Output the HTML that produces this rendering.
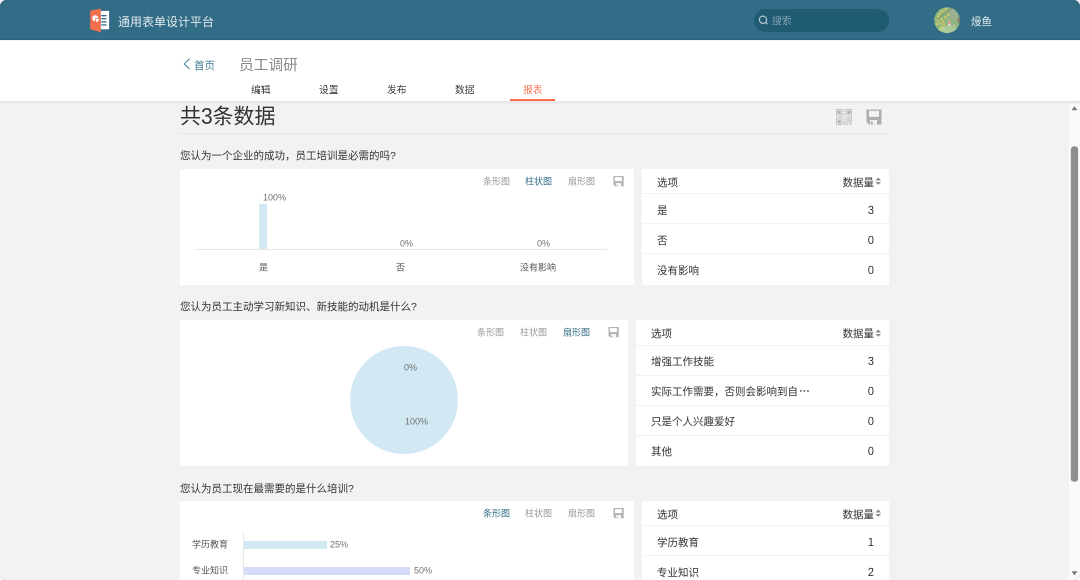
<!DOCTYPE html>
<html lang="zh-CN"><head><meta charset="utf-8">
<style>
*{box-sizing:border-box;margin:0;padding:0}
html,body{width:1080px;height:580px;overflow:hidden;background:#f2f2f2;font-family:"Liberation Sans",sans-serif;color:#333}
.abs{position:absolute}
.t{position:absolute;white-space:nowrap;line-height:1;transform:scale(.5);transform-origin:0 0;will-change:transform}
.t.r{transform:translateX(-100%) scale(.5);transform-origin:100% 0}
</style></head><body>
<div class="abs" style="left:0;top:0;width:1080px;height:40px;background:#326c86;border-bottom:1px solid #2b6680"></div>
<svg class="abs" style="left:85px;top:5px" width="30" height="30" viewBox="0 0 30 30">
    <polygon points="5.2,5.7 15.8,3.4 15.8,27.2 5.2,24.3" fill="#f36f4e"/>
    <rect x="15.8" y="5.9" width="8.3" height="18.4" fill="#fff"/>
    <rect x="16.3" y="10" width="5.2" height="1.3" fill="#336c86"/>
    <rect x="16.3" y="13.1" width="5.2" height="1.3" fill="#336c86"/>
    <rect x="16.3" y="16.2" width="5.2" height="1.3" fill="#336c86"/>
    <rect x="16.3" y="19.3" width="5.2" height="1.3" fill="#336c86"/>
    <path d="M10.2,13.3 L10.2,16.3 A3 3 0 1 1 13.2,13.3 Z" fill="#fff"/><path d="M11,14.1 L14,14.1 A3 3 0 0 1 11,17.1 Z" fill="#fff"/>
  </svg>
<div class="t" style="left:118px;top:15.8px;font-size:24px;transform:scale(0.5000);color:#e3ebef;">通用表单设计平台</div>
<div class="abs" style="left:754px;top:9px;width:135px;height:22.5px;border-radius:12px;background:#1f5b73"></div>
<svg class="abs" style="left:756px;top:13px" width="14" height="14" viewBox="0 0 14 14">
    <circle cx="7" cy="6.7" r="3.6" fill="none" stroke="#b5c9d2" stroke-width="1.2"/>
    <line x1="9.6" y1="9.3" x2="11.4" y2="11.2" stroke="#b5c9d2" stroke-width="1.3"/>
  </svg>
<div class="t" style="left:772.3px;top:16px;font-size:20px;transform:scale(0.4875);color:#86a3b0;">搜索</div>
<svg class="abs" style="left:932px;top:5px" width="30" height="30" viewBox="0 0 30 30">
<defs><clipPath id="av"><circle cx="15.05" cy="15.25" r="12.9"/></clipPath><filter id="bl" x="-10%" y="-10%" width="120%" height="120%"><feGaussianBlur stdDeviation="0.5"/></filter></defs>
<g clip-path="url(#av)"><g filter="url(#bl)">
<rect x="0" y="0" width="30" height="30" fill="#8fb67f"/>
<ellipse cx="22" cy="9" rx="6" ry="6" fill="#9aae90"/>
<ellipse cx="16" cy="26" rx="11" ry="5" fill="#a9cc98"/>
<ellipse cx="27" cy="15.5" rx="1.6" ry="3" fill="#86675d" fill-opacity="0.7"/>
<polyline points="19.7,3.5 10.3,10.3 5.7,14.5 3,17" fill="none" stroke="#6f6e4f" stroke-width="1.1" stroke-opacity="0.45"/>
<circle cx="13.4" cy="12.2" r="1.25" fill="#dccb68" fill-opacity="0.85"/><circle cx="16.6" cy="9.8" r="1.25" fill="#dccb68" fill-opacity="0.85"/><circle cx="14" cy="4.1" r="1.25" fill="#dccb68" fill-opacity="0.85"/><circle cx="6.2" cy="11.4" r="1.25" fill="#dccb68" fill-opacity="0.85"/><circle cx="7.2" cy="8.8" r="1.25" fill="#dccb68" fill-opacity="0.85"/><circle cx="9.3" cy="14" r="1.25" fill="#dccb68" fill-opacity="0.85"/><circle cx="10.9" cy="16.6" r="1.25" fill="#dccb68" fill-opacity="0.85"/><circle cx="4.7" cy="19.1" r="1.25" fill="#dccb68" fill-opacity="0.85"/><circle cx="8.3" cy="18.6" r="1.25" fill="#dccb68" fill-opacity="0.85"/><circle cx="10.3" cy="22.2" r="1.25" fill="#dccb68" fill-opacity="0.85"/><circle cx="8.3" cy="24.8" r="1.25" fill="#dccb68" fill-opacity="0.85"/><circle cx="10.3" cy="6.2" r="1.25" fill="#dccb68" fill-opacity="0.85"/><circle cx="5.5" cy="15.5" r="1.25" fill="#dccb68" fill-opacity="0.85"/><circle cx="12" cy="19.5" r="1.25" fill="#dccb68" fill-opacity="0.85"/>
<rect x="16.2" y="15" width="2.4" height="5.8" rx="1" fill="#e3a3a6"/>
<rect x="16.2" y="19" width="2.4" height="1.8" fill="#f0e0e0"/>
<circle cx="22.2" cy="20.4" r="0.9" fill="#e6b8a8"/>
</g></g></svg>
<div class="t" style="left:971.3px;top:15.5px;font-size:21px;transform:scale(0.5000);color:#dfe8ec;">熳鱼</div>
<div class="abs" style="left:0;top:41px;width:1080px;height:60px;background:#fff"></div>
<svg class="abs" style="left:182px;top:57px" width="10" height="14" viewBox="0 0 10 14">
    <polyline points="7.6,1.6 2.3,6.9 7.6,12.2" fill="none" stroke="#5189a2" stroke-width="1.1"/>
  </svg>
<div class="t" style="left:194px;top:59.7px;font-size:21px;transform:scale(0.5000);color:#3f7891;">首页</div>
<div class="t" style="left:239.3px;top:57.9px;font-size:29px;transform:scale(0.5069);color:#8a8a8a;font-weight:300">员工调研</div>
<div class="t" style="left:251px;top:85px;font-size:20px;transform:scale(0.4875);color:#444;">编辑</div>
<div class="t" style="left:319px;top:85px;font-size:20px;transform:scale(0.4875);color:#444;">设置</div>
<div class="t" style="left:387px;top:85px;font-size:20px;transform:scale(0.4875);color:#444;">发布</div>
<div class="t" style="left:455px;top:85px;font-size:20px;transform:scale(0.4875);color:#444;">数据</div>
<div class="t" style="left:523px;top:85px;font-size:20px;transform:scale(0.4875);color:#f87a5c;">报表</div>
<div class="abs" style="left:510px;top:99px;width:45px;height:2px;background:#fc6b4c"></div>
<div class="t" style="left:180px;top:106px;font-size:42px;transform:scale(0.5000);color:#333;">共<span style="display:inline-block;transform:scaleY(1.11);transform-origin:50% 62%">3</span>条数据</div>
<svg class="abs" style="left:836px;top:109px" width="16" height="16" viewBox="0 0 16 16"><rect x="0.5" y="0.5" width="5.4" height="5.4" fill="none" stroke="#c2c2c2" stroke-width="1"/><rect x="1.6" y="1.6" width="3.2" height="3.2" fill="#b2b2b2"/><rect x="10.1" y="0.5" width="5.4" height="5.4" fill="none" stroke="#c2c2c2" stroke-width="1"/><rect x="11.2" y="1.6" width="3.2" height="3.2" fill="#b2b2b2"/><rect x="0.5" y="10.1" width="5.4" height="5.4" fill="none" stroke="#c2c2c2" stroke-width="1"/><rect x="1.6" y="11.2" width="3.2" height="3.2" fill="#b2b2b2"/><rect x="0.0" y="7.2" width="0.8" height="0.8" fill="#bdbdbd"/><rect x="0.0" y="8.0" width="0.8" height="0.8" fill="#bdbdbd"/><rect x="0.8" y="8.0" width="0.8" height="0.8" fill="#bdbdbd"/><rect x="1.6" y="8.0" width="0.8" height="0.8" fill="#bdbdbd"/><rect x="2.4" y="7.2" width="0.8" height="0.8" fill="#bdbdbd"/><rect x="3.2" y="7.2" width="0.8" height="0.8" fill="#bdbdbd"/><rect x="3.2" y="8.0" width="0.8" height="0.8" fill="#bdbdbd"/><rect x="4.0" y="7.2" width="0.8" height="0.8" fill="#bdbdbd"/><rect x="4.0" y="8.0" width="0.8" height="0.8" fill="#bdbdbd"/><rect x="4.8" y="7.2" width="0.8" height="0.8" fill="#bdbdbd"/><rect x="5.6" y="7.2" width="0.8" height="0.8" fill="#bdbdbd"/><rect x="5.6" y="8.0" width="0.8" height="0.8" fill="#bdbdbd"/><rect x="7.2" y="0.8" width="0.8" height="0.8" fill="#bdbdbd"/><rect x="7.2" y="2.4" width="0.8" height="0.8" fill="#bdbdbd"/><rect x="7.2" y="4.0" width="0.8" height="0.8" fill="#bdbdbd"/><rect x="7.2" y="4.8" width="0.8" height="0.8" fill="#bdbdbd"/><rect x="7.2" y="5.6" width="0.8" height="0.8" fill="#bdbdbd"/><rect x="7.2" y="6.4" width="0.8" height="0.8" fill="#bdbdbd"/><rect x="7.2" y="8.0" width="0.8" height="0.8" fill="#bdbdbd"/><rect x="7.2" y="10.4" width="0.8" height="0.8" fill="#bdbdbd"/><rect x="7.2" y="12.0" width="0.8" height="0.8" fill="#bdbdbd"/><rect x="7.2" y="12.8" width="0.8" height="0.8" fill="#bdbdbd"/><rect x="7.2" y="13.6" width="0.8" height="0.8" fill="#bdbdbd"/><rect x="7.2" y="15.2" width="0.8" height="0.8" fill="#bdbdbd"/><rect x="8.0" y="0.0" width="0.8" height="0.8" fill="#bdbdbd"/><rect x="8.0" y="1.6" width="0.8" height="0.8" fill="#bdbdbd"/><rect x="8.0" y="2.4" width="0.8" height="0.8" fill="#bdbdbd"/><rect x="8.0" y="4.8" width="0.8" height="0.8" fill="#bdbdbd"/><rect x="8.0" y="8.8" width="0.8" height="0.8" fill="#bdbdbd"/><rect x="8.0" y="10.4" width="0.8" height="0.8" fill="#bdbdbd"/><rect x="8.0" y="11.2" width="0.8" height="0.8" fill="#bdbdbd"/><rect x="8.0" y="12.8" width="0.8" height="0.8" fill="#bdbdbd"/><rect x="8.0" y="13.6" width="0.8" height="0.8" fill="#bdbdbd"/><rect x="8.0" y="14.4" width="0.8" height="0.8" fill="#bdbdbd"/><rect x="8.8" y="9.6" width="0.8" height="0.8" fill="#bdbdbd"/><rect x="8.8" y="12.8" width="0.8" height="0.8" fill="#bdbdbd"/><rect x="8.8" y="15.2" width="0.8" height="0.8" fill="#bdbdbd"/><rect x="9.6" y="8.0" width="0.8" height="0.8" fill="#bdbdbd"/><rect x="9.6" y="12.0" width="0.8" height="0.8" fill="#bdbdbd"/><rect x="9.6" y="12.8" width="0.8" height="0.8" fill="#bdbdbd"/><rect x="9.6" y="14.4" width="0.8" height="0.8" fill="#bdbdbd"/><rect x="9.6" y="15.2" width="0.8" height="0.8" fill="#bdbdbd"/><rect x="10.4" y="7.2" width="0.8" height="0.8" fill="#bdbdbd"/><rect x="10.4" y="8.0" width="0.8" height="0.8" fill="#bdbdbd"/><rect x="10.4" y="8.8" width="0.8" height="0.8" fill="#bdbdbd"/><rect x="10.4" y="10.4" width="0.8" height="0.8" fill="#bdbdbd"/><rect x="10.4" y="11.2" width="0.8" height="0.8" fill="#bdbdbd"/><rect x="10.4" y="12.0" width="0.8" height="0.8" fill="#bdbdbd"/><rect x="10.4" y="13.6" width="0.8" height="0.8" fill="#bdbdbd"/><rect x="10.4" y="14.4" width="0.8" height="0.8" fill="#bdbdbd"/><rect x="11.2" y="9.6" width="0.8" height="0.8" fill="#bdbdbd"/><rect x="11.2" y="10.4" width="0.8" height="0.8" fill="#bdbdbd"/><rect x="11.2" y="11.2" width="0.8" height="0.8" fill="#bdbdbd"/><rect x="11.2" y="13.6" width="0.8" height="0.8" fill="#bdbdbd"/><rect x="11.2" y="14.4" width="0.8" height="0.8" fill="#bdbdbd"/><rect x="11.2" y="15.2" width="0.8" height="0.8" fill="#bdbdbd"/><rect x="12.0" y="7.2" width="0.8" height="0.8" fill="#bdbdbd"/><rect x="12.0" y="8.0" width="0.8" height="0.8" fill="#bdbdbd"/><rect x="12.0" y="9.6" width="0.8" height="0.8" fill="#bdbdbd"/><rect x="12.0" y="10.4" width="0.8" height="0.8" fill="#bdbdbd"/><rect x="12.0" y="11.2" width="0.8" height="0.8" fill="#bdbdbd"/><rect x="12.0" y="12.0" width="0.8" height="0.8" fill="#bdbdbd"/><rect x="12.8" y="8.8" width="0.8" height="0.8" fill="#bdbdbd"/><rect x="12.8" y="12.8" width="0.8" height="0.8" fill="#bdbdbd"/><rect x="12.8" y="13.6" width="0.8" height="0.8" fill="#bdbdbd"/><rect x="12.8" y="14.4" width="0.8" height="0.8" fill="#bdbdbd"/><rect x="13.6" y="7.2" width="0.8" height="0.8" fill="#bdbdbd"/><rect x="13.6" y="8.0" width="0.8" height="0.8" fill="#bdbdbd"/><rect x="13.6" y="8.8" width="0.8" height="0.8" fill="#bdbdbd"/><rect x="13.6" y="9.6" width="0.8" height="0.8" fill="#bdbdbd"/><rect x="13.6" y="10.4" width="0.8" height="0.8" fill="#bdbdbd"/><rect x="13.6" y="11.2" width="0.8" height="0.8" fill="#bdbdbd"/><rect x="13.6" y="12.0" width="0.8" height="0.8" fill="#bdbdbd"/><rect x="13.6" y="12.8" width="0.8" height="0.8" fill="#bdbdbd"/><rect x="13.6" y="13.6" width="0.8" height="0.8" fill="#bdbdbd"/><rect x="13.6" y="14.4" width="0.8" height="0.8" fill="#bdbdbd"/><rect x="13.6" y="15.2" width="0.8" height="0.8" fill="#bdbdbd"/><rect x="14.4" y="8.8" width="0.8" height="0.8" fill="#bdbdbd"/><rect x="14.4" y="9.6" width="0.8" height="0.8" fill="#bdbdbd"/><rect x="14.4" y="10.4" width="0.8" height="0.8" fill="#bdbdbd"/><rect x="14.4" y="11.2" width="0.8" height="0.8" fill="#bdbdbd"/><rect x="14.4" y="12.0" width="0.8" height="0.8" fill="#bdbdbd"/><rect x="14.4" y="14.4" width="0.8" height="0.8" fill="#bdbdbd"/><rect x="14.4" y="15.2" width="0.8" height="0.8" fill="#bdbdbd"/><rect x="15.2" y="7.2" width="0.8" height="0.8" fill="#bdbdbd"/><rect x="15.2" y="8.0" width="0.8" height="0.8" fill="#bdbdbd"/><rect x="15.2" y="8.8" width="0.8" height="0.8" fill="#bdbdbd"/><rect x="15.2" y="9.6" width="0.8" height="0.8" fill="#bdbdbd"/><rect x="15.2" y="11.2" width="0.8" height="0.8" fill="#bdbdbd"/><rect x="15.2" y="12.0" width="0.8" height="0.8" fill="#bdbdbd"/><rect x="15.2" y="14.4" width="0.8" height="0.8" fill="#bdbdbd"/></svg>
<svg class="abs" style="left:866px;top:109px" width="16" height="16" viewBox="0 0 16 16">
    <path d="M0.5,0.5 H15.5 V15.5 H3 L0.5,13 Z" fill="#adadad"/>
    <rect x="3" y="1.7" width="10" height="6.2" fill="#f2f2f2"/>
    <rect x="4" y="11" width="7" height="4.5" fill="#f2f2f2"/>
    <rect x="5" y="12.2" width="1.7" height="3.3" fill="#adadad"/>
  </svg>
<div class="abs" style="left:180px;top:132.6px;width:709px;height:1px;background:#e6e6e6"></div>
<div class="t" style="left:180px;top:149.5px;font-size:21px;transform:scale(0.5000);color:#333;">您认为一个企业的成功，员工培训是必需的吗?</div>
<div class="abs" style="left:180px;top:168.5px;width:453.5px;height:116px;background:#fff"></div>
<div class="t" style="left:482.5px;top:176.5px;font-size:18px;transform:scale(0.5000);color:#999;">条形图</div>
<div class="t" style="left:525.0px;top:176.5px;font-size:18px;transform:scale(0.5000);color:#336d86;">柱状图</div>
<div class="t" style="left:568.3px;top:176.5px;font-size:18px;transform:scale(0.5000);color:#999;">扇形图</div>
<svg class="abs" style="left:613.0px;top:175.8px" width="11" height="11" viewBox="0 0 11 11">
    <path d="M0.5,0 H10.7 V10.3 H1.8 L0.5,9 Z" fill="#b3b3b3"/>
    <rect x="1.9" y="1.1" width="7" height="4" fill="#fff"/>
    <rect x="2.9" y="7.2" width="5.2" height="3.1" fill="#fff"/>
    <rect x="3.6" y="8.6" width="1.2" height="1.7" fill="#b3b3b3"/>
  </svg>
<div class="abs" style="left:194.4px;top:248.5px;width:412.3px;height:1px;background:#e8e8e8"></div>
<div class="abs" style="left:259px;top:203.5px;width:7.5px;height:45px;background:#d2e9f4"></div>
<div class="t" style="left:263.4px;top:193.0px;font-size:18px;transform:scale(0.5000);color:#707070;">100%</div>
<div class="t" style="left:400px;top:239.0px;font-size:18px;transform:scale(0.5000);color:#707070;">0%</div>
<div class="t" style="left:537.3px;top:239.0px;font-size:18px;transform:scale(0.5000);color:#707070;">0%</div>
<div class="t" style="left:258.5px;top:263.0px;font-size:18px;transform:scale(0.5000);color:#555;">是</div>
<div class="t" style="left:396px;top:263.0px;font-size:18px;transform:scale(0.5000);color:#555;">否</div>
<div class="t" style="left:519.6px;top:263.0px;font-size:18px;transform:scale(0.5000);color:#555;">没有影响</div>
<div class="abs" style="left:641.5px;top:168.5px;width:247.5px;height:116px;background:#fff"></div>
<div class="t" style="left:656.5px;top:176.5px;font-size:21px;transform:scale(0.5000);color:#333;">选项</div>
<div class="t r" style="left:873.5px;top:176.5px;font-size:21px;transform:translateX(-100%) scale(0.5000);color:#333;">数据量</div>
<svg class="abs" style="left:875px;top:177.25px" width="7" height="9" viewBox="0 0 7 9">
    <polygon points="0.4,3.4 3.25,0.5 6.1,3.4" fill="#8a8a8a"/><polygon points="0.4,4.9 3.25,7.8 6.1,4.9" fill="#8a8a8a"/></svg>
<div class="abs" style="left:641.5px;top:193.0px;width:247.5px;height:1px;background:#f2f2f2"></div>
<div class="t" style="left:656.5px;top:204.5px;font-size:21px;transform:scale(0.5000);color:#333;">是</div>
<div class="t r" style="left:873.8px;top:203.7px;font-size:22px;transform:translateX(-100%) scale(0.5000,0.5600);color:#333;">3</div>
<div class="abs" style="left:641.5px;top:223.0px;width:247.5px;height:1px;background:#f2f2f2"></div>
<div class="t" style="left:656.5px;top:234.5px;font-size:21px;transform:scale(0.5000);color:#333;">否</div>
<div class="t r" style="left:873.8px;top:233.7px;font-size:22px;transform:translateX(-100%) scale(0.5000,0.5600);color:#333;">0</div>
<div class="abs" style="left:641.5px;top:253.0px;width:247.5px;height:1px;background:#f2f2f2"></div>
<div class="t" style="left:656.5px;top:264.5px;font-size:21px;transform:scale(0.5000);color:#333;">没有影响</div>
<div class="t r" style="left:873.8px;top:263.7px;font-size:22px;transform:translateX(-100%) scale(0.5000,0.5600);color:#333;">0</div>
<div class="t" style="left:180px;top:300.5px;font-size:21px;transform:scale(0.5000);color:#333;">您认为员工主动学习新知识、新技能的动机是什么?</div>
<div class="abs" style="left:180px;top:320px;width:448.4px;height:145.5px;background:#fff"></div>
<div class="t" style="left:477.4px;top:328px;font-size:18px;transform:scale(0.5000);color:#999;">条形图</div>
<div class="t" style="left:519.9px;top:328px;font-size:18px;transform:scale(0.5000);color:#999;">柱状图</div>
<div class="t" style="left:563.1999999999999px;top:328px;font-size:18px;transform:scale(0.5000);color:#336d86;">扇形图</div>
<svg class="abs" style="left:607.9px;top:327.3px" width="11" height="11" viewBox="0 0 11 11">
    <path d="M0.5,0 H10.7 V10.3 H1.8 L0.5,9 Z" fill="#b3b3b3"/>
    <rect x="1.9" y="1.1" width="7" height="4" fill="#fff"/>
    <rect x="2.9" y="7.2" width="5.2" height="3.1" fill="#fff"/>
    <rect x="3.6" y="8.6" width="1.2" height="1.7" fill="#b3b3b3"/>
  </svg>
<div class="abs" style="left:350.3px;top:345.8px;width:108px;height:108px;border-radius:50%;background:#d2e9f4"></div>
<div class="t" style="left:404.3px;top:363px;font-size:18px;transform:scale(0.5000);color:#707070;">0%</div>
<div class="t" style="left:404.7px;top:417px;font-size:18px;transform:scale(0.5000);color:#707070;">100%</div>
<div class="abs" style="left:636.4px;top:320px;width:252.60000000000002px;height:145.5px;background:#fff"></div>
<div class="t" style="left:651.4px;top:328px;font-size:21px;transform:scale(0.5000);color:#333;">选项</div>
<div class="t r" style="left:873.5px;top:328px;font-size:21px;transform:translateX(-100%) scale(0.5000);color:#333;">数据量</div>
<svg class="abs" style="left:875px;top:328.75px" width="7" height="9" viewBox="0 0 7 9">
    <polygon points="0.4,3.4 3.25,0.5 6.1,3.4" fill="#8a8a8a"/><polygon points="0.4,4.9 3.25,7.8 6.1,4.9" fill="#8a8a8a"/></svg>
<div class="abs" style="left:636.4px;top:344.5px;width:252.60000000000002px;height:1px;background:#f2f2f2"></div>
<div class="t" style="left:651.4px;top:356px;font-size:21px;transform:scale(0.5000);color:#333;">增强工作技能</div>
<div class="t r" style="left:873.8px;top:355.2px;font-size:22px;transform:translateX(-100%) scale(0.5000,0.5600);color:#333;">3</div>
<div class="abs" style="left:636.4px;top:374.5px;width:252.60000000000002px;height:1px;background:#f2f2f2"></div>
<div class="t" style="left:651.4px;top:386px;font-size:21px;transform:scale(0.5000);color:#333;">实际工作需要，否则会影响到自</div>
<div class="t r" style="left:873.8px;top:385.2px;font-size:22px;transform:translateX(-100%) scale(0.5000,0.5600);color:#333;">0</div>
<div class="abs" style="left:636.4px;top:404.5px;width:252.60000000000002px;height:1px;background:#f2f2f2"></div>
<div class="t" style="left:651.4px;top:416px;font-size:21px;transform:scale(0.5000);color:#333;">只是个人兴趣爱好</div>
<div class="t r" style="left:873.8px;top:415.2px;font-size:22px;transform:translateX(-100%) scale(0.5000,0.5600);color:#333;">0</div>
<div class="abs" style="left:636.4px;top:434.5px;width:252.60000000000002px;height:1px;background:#f2f2f2"></div>
<div class="t" style="left:651.4px;top:446px;font-size:21px;transform:scale(0.5000);color:#333;">其他</div>
<div class="t r" style="left:873.8px;top:445.2px;font-size:22px;transform:translateX(-100%) scale(0.5000,0.5600);color:#333;">0</div>
<svg class="abs" style="left:799px;top:389px" width="11" height="4" viewBox="0 0 11 4"><rect x="1.1" y="1.1" width="1.6" height="1.6" fill="#555"/><rect x="4.5" y="1.1" width="1.6" height="1.6" fill="#555"/><rect x="8.2" y="1.1" width="1.6" height="1.6" fill="#555"/></svg>
<div class="t" style="left:180px;top:482.5px;font-size:21px;transform:scale(0.5000);color:#333;">您认为员工现在最需要的是什么培训?</div>
<div class="abs" style="left:180px;top:500.6px;width:453.5px;height:120px;background:#fff"></div>
<div class="t" style="left:482.5px;top:508.6px;font-size:18px;transform:scale(0.5000);color:#336d86;">条形图</div>
<div class="t" style="left:525.0px;top:508.6px;font-size:18px;transform:scale(0.5000);color:#999;">柱状图</div>
<div class="t" style="left:568.3px;top:508.6px;font-size:18px;transform:scale(0.5000);color:#999;">扇形图</div>
<svg class="abs" style="left:613.0px;top:507.90000000000003px" width="11" height="11" viewBox="0 0 11 11">
    <path d="M0.5,0 H10.7 V10.3 H1.8 L0.5,9 Z" fill="#b3b3b3"/>
    <rect x="1.9" y="1.1" width="7" height="4" fill="#fff"/>
    <rect x="2.9" y="7.2" width="5.2" height="3.1" fill="#fff"/>
    <rect x="3.6" y="8.6" width="1.2" height="1.7" fill="#b3b3b3"/>
  </svg>
<div class="abs" style="left:243px;top:531.6px;width:1px;height:60px;background:#e8e8e8"></div>
<div class="abs" style="left:243.5px;top:540.6px;width:83.3px;height:8px;background:#d2e9f4"></div>
<div class="t" style="left:330px;top:539.6px;font-size:18px;transform:scale(0.5000);color:#707070;">25%</div>
<div class="abs" style="left:243.5px;top:566.9px;width:166.5px;height:8px;background:#d6dcf7"></div>
<div class="t" style="left:413.7px;top:565.9px;font-size:18px;transform:scale(0.5000);color:#707070;">50%</div>
<div class="t" style="left:192px;top:540.1px;font-size:18px;transform:scale(0.5000);color:#555;">学历教育</div>
<div class="t" style="left:192px;top:566.4px;font-size:18px;transform:scale(0.5000);color:#555;">专业知识</div>
<div class="abs" style="left:641.5px;top:500.6px;width:247.5px;height:120px;background:#fff"></div>
<div class="t" style="left:656.5px;top:508.6px;font-size:21px;transform:scale(0.5000);color:#333;">选项</div>
<div class="t r" style="left:873.5px;top:508.6px;font-size:21px;transform:translateX(-100%) scale(0.5000);color:#333;">数据量</div>
<svg class="abs" style="left:875px;top:509.35px" width="7" height="9" viewBox="0 0 7 9">
    <polygon points="0.4,3.4 3.25,0.5 6.1,3.4" fill="#8a8a8a"/><polygon points="0.4,4.9 3.25,7.8 6.1,4.9" fill="#8a8a8a"/></svg>
<div class="abs" style="left:641.5px;top:525.1px;width:247.5px;height:1px;background:#f2f2f2"></div>
<div class="t" style="left:656.5px;top:536.6px;font-size:21px;transform:scale(0.5000);color:#333;">学历教育</div>
<div class="t r" style="left:873.8px;top:535.8000000000001px;font-size:22px;transform:translateX(-100%) scale(0.5000,0.5600);color:#333;">1</div>
<div class="abs" style="left:641.5px;top:555.1px;width:247.5px;height:1px;background:#f2f2f2"></div>
<div class="t" style="left:656.5px;top:566.6px;font-size:21px;transform:scale(0.5000);color:#333;">专业知识</div>
<div class="t r" style="left:873.8px;top:565.8000000000001px;font-size:22px;transform:translateX(-100%) scale(0.5000,0.5600);color:#333;">2</div>
<div class="abs" style="left:1069px;top:101px;width:11px;height:479px;background:#fafafa"></div>
<svg class="abs" style="left:1069px;top:101px" width="11" height="479" viewBox="0 0 11 479">
  <polygon points="2.5,9.2 5.5,5.2 8.5,9.2" fill="#7a7a7a"/>
  <rect x="1.8" y="45.3" width="7.3" height="335.5" rx="3.6" fill="#8e8e8e"/>
  <polygon points="2.4,470.2 5.5,474.3 8.6,470.2" fill="#7a7a7a"/>
</svg>
<div class="abs" style="left:0;top:101px;width:1080px;height:4px;background:linear-gradient(#dde3e6,rgba(242,242,242,0))"></div>
<svg class="abs" style="left:0;top:0" width="8" height="8" viewBox="0 0 8 8"><path d="M0,0 H6.5 A6.5 6.5 0 0 0 0,6.5 Z" fill="#eef0f1"/><path d="M6.5,0.4 A6.1 6.1 0 0 0 0.4,6.5" fill="none" stroke="#2a6680" stroke-width="0.8"/></svg>
<svg class="abs" style="left:1072px;top:0" width="8" height="8" viewBox="0 0 8 8"><path d="M8,0 H1.5 A6.5 6.5 0 0 1 8,6.5 Z" fill="#eef0f1"/><path d="M1.5,0.4 A6.1 6.1 0 0 1 7.6,6.5" fill="none" stroke="#2a6680" stroke-width="0.8"/></svg>
<svg class="abs" style="left:0;top:572px" width="8" height="8" viewBox="0 0 8 8"><path d="M0,8 H5.5 A5.5 5.5 0 0 1 0,2.5 Z" fill="#f8f8f8"/><path d="M5.5,7.6 A5.1 5.1 0 0 1 0.4,2.5" fill="none" stroke="#dcdcdc" stroke-width="0.8"/></svg>
<svg class="abs" style="left:1072px;top:572px" width="8" height="8" viewBox="0 0 8 8"><path d="M8,8 H2.5 A5.5 5.5 0 0 0 8,2.5 Z" fill="#fdfdfd"/><path d="M2.5,7.6 A5.1 5.1 0 0 0 7.6,2.5" fill="none" stroke="#e0e0e0" stroke-width="0.8"/></svg>
</body></html>
